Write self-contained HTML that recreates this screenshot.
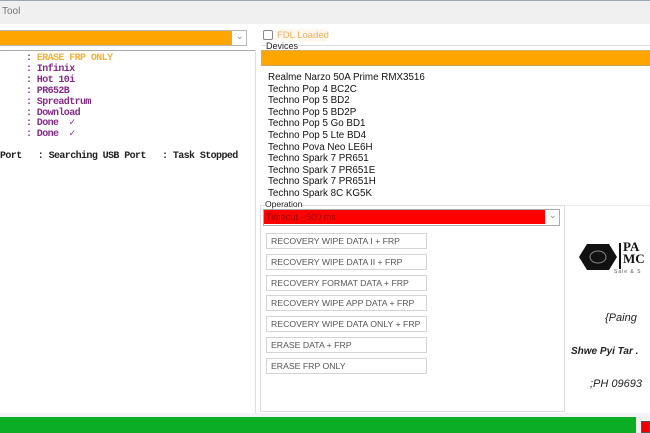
<!DOCTYPE html>
<html><head><meta charset="utf-8"><style>
*{margin:0;padding:0;box-sizing:border-box}
body{width:650px;height:433px;overflow:hidden;background:#fff;position:relative;font-family:"Liberation Sans",sans-serif;font-size:10px;color:#000}
.a{position:absolute}
.mono{font-family:"Liberation Mono",monospace;font-weight:bold;font-size:10px;letter-spacing:-0.6px;white-space:pre;line-height:10.9px}
.btn{position:absolute;left:266px;width:161px;height:16px;border:1px solid #d4d4d4;background:#fff;color:#555;font-size:8.7px;line-height:14px;padding-left:4px;white-space:nowrap;overflow:hidden}
.dev{line-height:11.6px;font-size:9.8px;color:#111}
</style></head><body>
<div class="a" style="left:0;top:0;width:650px;height:1px;background:#9aa6b4"></div>
<div class="a" style="left:0;top:1px;width:650px;height:23px;background:#f0f0f0"></div>
<div class="a" style="left:2px;top:6px;color:#777;font-size:10px">Tool</div>
<div class="a" style="left:0;top:30px;width:247px;height:16px;border:1px solid #b8b8b8;background:#fff"></div>
<div class="a" style="left:0;top:31px;width:232px;height:14px;background:#ffa500"></div>
<div class="a" style="left:236px;top:31px;color:#888;font-size:9px">&#8964;</div>
<div class="a" style="left:0;top:50px;width:256px;height:1px;background:#aaa"></div>
<div class="a" style="left:255px;top:50px;width:1px;height:365px;background:#ddd"></div>
<div class="a mono" style="left:26px;top:54px;color:#862a8a">: <span style="color:#f3b23a">ERASE FRP ONLY</span>
: Infinix
: Hot 10i
: PR652B
: Spreadtrum
: Download
: Done  &#10003;
: Done  &#10003;</div>
<div class="a mono" style="left:0;top:152px;color:#222">Port   : Searching USB Port   : Task Stopped</div>
<div class="a" style="left:263px;top:30px;width:10px;height:10px;border:1px solid #888;border-radius:2px;background:#fff"></div>
<div class="a" style="left:275px;top:29px;width:52px;height:13px;background:#fdf7ee"></div>
<div class="a" style="left:277px;top:30px;color:#f3b060;font-size:9.5px">FDL Loaded</div>
<div class="a" style="left:261px;top:45px;width:389px;height:1px;background:#ddd"></div>
<div class="a" style="left:266px;top:41px;font-size:9px;color:#222;background:#fff">Devices</div>
<div class="a" style="left:261px;top:50px;width:389px;height:16px;background:#ffa500;border-top:1px solid #d8b060;border-bottom:1px solid #c8a060"></div>
<div class="a dev" style="left:268px;top:72px">Realme Narzo 50A Prime RMX3516<br>Techno Pop 4 BC2C<br>Techno Pop 5 BD2<br>Techno Pop 5 BD2P<br>Techno Pop 5 Go BD1<br>Techno Pop 5 Lte BD4<br>Techno Pova Neo LE6H<br>Techno Spark 7 PR651<br>Techno Spark 7 PR651E<br>Techno Spark 7 PR651H<br>Techno Spark 8C KG5K</div>
<div class="a" style="left:260px;top:205px;width:305px;height:207px;border:1px solid #ddd"></div>
<div class="a" style="left:265px;top:199px;font-size:8.5px;color:#222;background:#fff">Operation</div>
<div class="a" style="left:263px;top:209px;width:297px;height:17px;border:1px solid #aaa;background:#fff"></div>
<div class="a" style="left:264px;top:210px;width:281px;height:14px;background:#f00;color:#900;font-size:9px;line-height:14px;padding-left:2px">Timeout - 500 ms</div>
<div class="a" style="left:549px;top:210px;color:#888;font-size:9px">&#8964;</div>
<div class="btn" style="top:233px">RECOVERY WIPE DATA I + FRP</div>
<div class="btn" style="top:254px">RECOVERY WIPE DATA II + FRP</div>
<div class="btn" style="top:275px">RECOVERY FORMAT DATA + FRP</div>
<div class="btn" style="top:295px">RECOVERY WIPE APP DATA + FRP</div>
<div class="btn" style="top:316px">RECOVERY WIPE DATA ONLY + FRP</div>
<div class="btn" style="top:337px">ERASE DATA + FRP</div>
<div class="btn" style="top:358px">ERASE FRP ONLY</div>
<div class="a" style="left:565px;top:205px;width:85px;height:207px;border-top:1px solid #eee;background:#fff"></div>
<svg class="a" style="left:578px;top:243px" width="40" height="28"><polygon points="9,1 31,1 39,14 31,27 9,27 1,14" fill="#111"/><ellipse cx="20" cy="14" rx="8" ry="6" fill="none" stroke="#888" stroke-width="1"/></svg>
<div class="a" style="left:619px;top:243px;width:2px;height:26px;background:#111"></div>
<div class="a" style="left:623px;top:241px;font-family:'Liberation Serif',serif;font-weight:bold;font-size:13px;line-height:12px;color:#111">PA<br>MC</div>
<div class="a" style="left:614px;top:269px;font-size:5px;color:#555;letter-spacing:1px">Sale &amp; S</div>
<div class="a" style="left:605px;top:312px;font-style:italic;font-size:11px;color:#222">{Paing</div>
<div class="a" style="left:571px;top:346px;font-style:italic;font-weight:bold;font-size:10px;color:#222">Shwe Pyi Tar .</div>
<div class="a" style="left:590px;top:378px;font-style:italic;font-size:11px;color:#222">;PH 09693</div>
<div class="a" style="left:0;top:413px;width:650px;height:4px;background:#f4f4f8"></div>
<div class="a" style="left:0;top:417px;width:636px;height:16px;background:#0aad24"></div>
<div class="a" style="left:636px;top:417px;width:14px;height:16px;background:#f0f0f0"></div>
<div class="a" style="left:641px;top:421px;width:9px;height:12px;background:#e00;border:1px solid #555"></div>
</body></html>
